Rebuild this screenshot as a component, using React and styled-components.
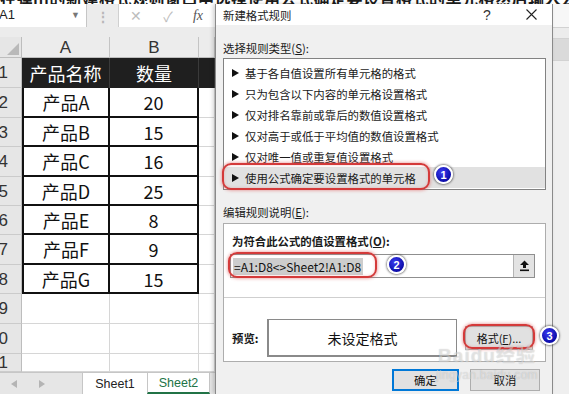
import React from 'react';
import styled, { createGlobalStyle, css } from 'styled-components';

const Global = createGlobalStyle`
  html, body { margin: 0; padding: 0; }
  body {
    width: 569px; height: 394px; overflow: hidden; background: #fff;
    font-family: "Noto Sans CJK SC", "Noto Sans", sans-serif;
  }
  #root { width: 569px; height: 394px; }
`;

const CJK = `"Noto Sans CJK SC", "Noto Sans", sans-serif`;
const LAT = `"Liberation Sans", "Noto Sans CJK SC", sans-serif`;

const Page = styled.div`
  width: 569px; height: 394px; display: flex; flex-direction: column; overflow: hidden;
`;
const TopStrip = styled.div`
  flex: none; height: 4px; overflow: hidden; clip-path: inset(0 0 0 0); contain: paint;
  background: #fff; white-space: nowrap; display: flex; align-items: flex-end;
`;
const StripText = styled.div`
  flex: none; font-family: ${CJK}; font-size: 16px; line-height: 16px; font-weight: 700;
  color: #1c1c1c; margin-bottom: -2px; letter-spacing: 0.5px;
`;
const Main = styled.div`
  flex: 1; display: flex; min-height: 0;
`;

/* ---------- Excel sheet ---------- */
const Sheet = styled.div`
  width: 215px; flex: none; display: flex; flex-direction: column; background: #e8e8e8;
`;
const FormulaBar = styled.div`
  height: 23px; display: flex; align-items: stretch; background: #ececec;
`;
const NameBox = styled.div`
  width: 87px; background: #fff; border-right: 1px solid #c6c6c6; box-sizing: border-box;
  display: flex; align-items: center; justify-content: space-between; padding: 0 6px 2px 0;
  font-family: ${LAT}; font-size: 13px; color: #222; overflow: hidden;
`;
const NameText = styled.span` margin-left: -1px; `;
const Caret = styled.span` font-size: 9px; color: #777; `;
const Grip = styled.div`
  width: 31px; display: flex; align-items: center; justify-content: center;
  color: #b8b8b8; font-size: 14px; font-weight: 700;
`;
const FxBox = styled.div`
  flex: 1; background: #fff; border-left: 1px solid #d0d0d0; display: flex; align-items: center;
  font-family: ${LAT}; color: #bdbdbd; font-size: 14px; overflow: hidden;
`;
const FxIcon = styled.span`
  width: ${p => p.$w}px; flex: none; text-align: center;
  ${p => p.$fx && css`font-family: "Liberation Serif", serif; font-style: italic; color: #555; font-size: 14px;`}
`;
const BarGap = styled.div` height: 10px; background: #ececec; `;

const Grid = styled.div`
  display: grid;
  grid-template-columns: 22px 88px 89px 16px;
  grid-template-rows: 21px 30px 30px 29px 30px 29px 29px 30px 29px 30px 30px 18px;
  background: #fff;
`;

const kinds = {
  corner: css`background: #e6e6e6; border-right: 1px solid #bdbdbd; border-bottom: 1px solid #bdbdbd;
    align-items: flex-end; justify-content: flex-end; padding: 0 2px 2px 0;`,
  colhead: css`background: #ececec; border-right: 1px solid #c4c4c4; border-bottom: 1px solid #bdbdbd;
    font-family: ${LAT}; font-size: 17px; color: #333;`,
  rowhead: css`background: #e6e6e6; border-right: 1px solid #bdbdbd; border-bottom: 1px solid #cbcbcb;
    justify-content: flex-end; padding-right: 13px; font-family: ${LAT}; font-size: 17px; color: #333;`,
  dark: css`background: #1f1f1f; color: #fff; border-right: 1px solid #3a3a3a; font-family: ${CJK}; font-size: 18px;`,
  data: css`background: #fff; color: #111; border-right: 2px solid #111; border-bottom: 2px solid #111;
    font-family: ${CJK}; font-size: 18px;`,
  blank: css`background: #fff; border-right: 1px solid #d6d6d6; border-bottom: 1px solid #d6d6d6;`,
};

const Cell = styled.div`
  box-sizing: border-box; display: flex; align-items: center; justify-content: center;
  overflow: hidden; white-space: nowrap; line-height: 1;
  ${p => kinds[p.$kind]}
  ${p => p.$lead && css`border-left: 2px solid #111;`}
`;

const Tabs = styled.div`
  height: 22px; display: flex; align-items: stretch; background: #e6e6e6;
  border-top: 1px solid #c6c6c6; box-sizing: border-box;
`;
const Nav = styled.div`
  width: 82px; display: flex; align-items: center; padding-left: 11px; gap: 22px; box-sizing: border-box;
`;
const Tab = styled.div`
  width: ${p => p.$w}px; display: flex; align-items: center; justify-content: center;
  font-family: ${LAT}; font-size: 12.5px; background: #fff; box-sizing: border-box;
  border-left: 1px solid #c6c6c6;
  color: ${p => (p.$active ? '#217346' : '#222')};
  ${p => p.$active && css`border-bottom: 2px solid #217346; border-right: 1px solid #c6c6c6;`}
`;

/* ---------- Dialog ---------- */
const Dialog = styled.div`
  width: 338px; flex: none; display: flex; flex-direction: column; background: #f0f0f0;
  position: relative; box-sizing: border-box;
  border-left: 1px solid #8a8a8a; border-right: 1px solid #8a8a8a;
  box-shadow: -2px 0 4px rgba(0, 0, 0, 0.18);
  font-family: ${CJK}; color: #1a1a1a;
`;
const TitleBar = styled.div`
  height: 21px; background: #fff; display: flex; align-items: center; padding: 0 11px 0 7px;
`;
const Title = styled.span` font-size: 11.4px; color: #222; flex: 1; `;
const TitleBtn = styled.span`
  width: ${p => p.$w}px; display: flex; justify-content: center; font-family: ${LAT};
  font-size: ${p => p.$fs}px; color: #333; margin-left: ${p => p.$ml || 0}px;
`;
const Body = styled.div`
  flex: 1; display: flex; flex-direction: column; padding: 0 6px 0 7px;
`;
const Label = styled.div`
  margin-top: ${p => p.$mt}px; font-size: 11.4px; line-height: 16px;
  u { text-decoration: underline; }
`;
const List = styled.div`
  margin-top: 2px; height: 132px; box-sizing: border-box; border: 1px solid #828282;
  background: #fff; padding-top: 3px; position: relative;
`;
const Item = styled.div`
  height: 21px; display: flex; align-items: center; gap: 6px; padding-left: 8px;
  font-size: 11.4px; color: #1a1a1a; background: ${p => (p.$sel ? '#e1e1e1' : 'transparent')};
`;
const DescBox = styled.div`
  margin-top: 3px; height: 139px; box-sizing: border-box; border: 1px solid #adadad;
  background: #fff; position: relative; display: flex; flex-direction: column;
`;
const Bold = styled.div`
  margin: 9px 0 0 8px; font-size: 11.4px; line-height: 16px; font-weight: 700;
`;
const InputRow = styled.div`
  margin: 5px 10px 0 6px; height: 24px; box-sizing: border-box; border: 1px solid #8f8f8f;
  display: flex; background: #fff;
`;
const FormulaText = styled.div`
  flex: 1; display: flex; align-items: center; padding-left: 2px;
`;
const Selected = styled.span`
  background: #cdcdcd; color: #111; font-size: 12px; line-height: 17px; padding: 0 2px 0 1px;
  font-family: ${CJK};
`;
const RefBtn = styled.div`
  width: 20px; background: #e3e3e3; border-left: 1px solid #b4b4b4;
  display: flex; align-items: center; justify-content: center;
`;
const Divider = styled.div` margin-top: 19px; height: 1px; background: #cfcfcf; `;
const PreviewRow = styled.div`
  margin-top: 21px; display: flex; align-items: center; padding-left: 8px; position: relative;
`;
const PreviewLabel = styled.span` width: 35px; font-size: 11.4px; font-weight: 700; `;
const PreviewBox = styled.div`
  width: 190px; height: 38px; box-sizing: border-box; border: 1px solid #8a8a8a;
  border-left-width: 2px; border-bottom-width: 2px;
  display: flex; align-items: center; justify-content: center; font-size: 14px; color: #111;
`;
const Button = styled.div`
  width: ${p => p.$w}px; height: ${p => p.$h}px; box-sizing: border-box; background: #e1e1e1;
  border: ${p => (p.$primary ? '2px solid #0078d7' : '1px solid #adadad')};
  display: flex; align-items: center; justify-content: center; font-size: ${p => p.$fs || 11.4}px;
  color: #111; margin-left: ${p => p.$ml || 0}px;
`;
const ButtonRow = styled.div`
  margin-top: 7px; display: flex; justify-content: flex-end; gap: 11px; padding-right: 6px;
`;

const Oval = styled.span`
  position: absolute; left: ${p => p.$l}px; top: ${p => p.$t}px; width: ${p => p.$w}px; height: ${p => p.$h}px;
  box-sizing: border-box; border: 2px solid #d43a3a; border-radius: 9px; pointer-events: none;
  box-shadow: 0 0 3px 1px rgba(220, 90, 90, 0.45), inset 0 0 3px rgba(220, 90, 90, 0.35);
`;
const Badge = styled.span`
  position: absolute; left: ${p => p.$l}px; top: ${p => p.$t}px; z-index: 5;
  width: 19px; height: 19px; box-sizing: border-box; border-radius: 50%;
  background: radial-gradient(circle at 40% 35%, #3c3cf2, #0b0ba8 70%);
  border: 2px solid #fff; box-shadow: 0 0 2px 1px rgba(0, 0, 0, 0.45);
  color: #fff; font-family: ${LAT}; font-weight: 700; font-size: 11px;
  display: flex; align-items: center; justify-content: center;
`;
const Watermark = styled.div`
  position: absolute; left: 221px; top: 341px; width: 100px; pointer-events: none; z-index: 4;
  display: flex; flex-direction: column; align-items: center;
  color: rgba(255, 255, 255, 0.45); text-shadow: 0 0 1px rgba(0, 0, 0, 0.22);
`;
const WmBig = styled.span` font-family: ${LAT}; font-size: 19px; line-height: 22px; font-weight: 700; letter-spacing: 1px; white-space: nowrap; `;
const WmSmall = styled.span` font-family: ${LAT}; font-size: 12px; line-height: 12px; margin-top: 2px; letter-spacing: 0.3px; white-space: nowrap; `;

/* ---------- right strip ---------- */
const RightStrip = styled.div`
  flex: 1; display: flex; flex-direction: column; background: #efefef;
`;
const StripPart = styled.div`
  height: ${p => p.$h}px; background: ${p => p.$bg}; border-bottom: 1px solid #d2d2d2;
`;

const Arrow = ({ dir }) => (
  <svg width="6" height="8" viewBox="0 0 6 8">
    <polygon points={dir === 'l' ? '6,0 0,4 6,8' : '0,0 6,4 0,8'} fill="#b4b4b4" />
  </svg>
);
const Tri = () => (
  <svg width="7" height="8" viewBox="0 0 7 8">
    <polygon points="0,0 7,4 0,8" fill="#111" />
  </svg>
);
const RefIcon = () => (
  <svg width="11" height="12" viewBox="0 0 11 12">
    <polygon points="5.5,0.5 10,5 7,5 7,8 4,8 4,5 1,5" fill="#111" />
    <rect x="1" y="9.5" width="9" height="1.6" fill="#111" />
  </svg>
);
const CornerTri = () => (
  <svg width="12" height="12" viewBox="0 0 12 12">
    <polygon points="12,0 12,12 0,12" fill="#b9b9b9" />
  </svg>
);
const CloseIcon = () => (
  <svg width="11" height="11" viewBox="0 0 11 11">
    <path d="M0.5 0.5 L10.5 10.5 M10.5 0.5 L0.5 10.5" stroke="#222" strokeWidth="1.1" fill="none" />
  </svg>
);

const tableRows = [
  { h: '1', a: '产品名称', b: '数量', head: true },
  { h: '2', a: '产品A', b: '20' },
  { h: '3', a: '产品B', b: '15' },
  { h: '4', a: '产品C', b: '16' },
  { h: '5', a: '产品D', b: '25' },
  { h: '6', a: '产品E', b: '8' },
  { h: '7', a: '产品F', b: '9' },
  { h: '8', a: '产品G', b: '15' },
];
const blankRows = ['9', '10', '11'];

const rules = [
  '基于各自值设置所有单元格的格式',
  '只为包含以下内容的单元格设置格式',
  '仅对排名靠前或靠后的数值设置格式',
  '仅对高于或低于平均值的数值设置格式',
  '仅对唯一值或重复值设置格式',
  '使用公式确定要设置格式的单元格',
];

export default function App() {
  return (
    <Page>
      <Global />
      <TopStrip>
        <StripText>在弹出的新建格式规则窗口中选择使用公式确定要设置格式的单元格然后输入公式再点击格式按钮进行设置操作步骤</StripText>
      </TopStrip>
      <Main>
        <Sheet>
          <FormulaBar>
            <NameBox>
              <NameText>A1</NameText>
              <Caret>▼</Caret>
            </NameBox>
            <Grip>⋮</Grip>
            <FxBox>
              <FxIcon $w={34}>✕</FxIcon>
              <FxIcon $w={30}>✓</FxIcon>
              <FxIcon $w={30} $fx>fx</FxIcon>
            </FxBox>
          </FormulaBar>
          <BarGap />
          <Grid>
            <Cell $kind="corner"><CornerTri /></Cell>
            <Cell $kind="colhead">A</Cell>
            <Cell $kind="colhead">B</Cell>
            <Cell $kind="colhead" />
            {tableRows.map(r => (
              <React.Fragment key={r.h}>
                <Cell $kind="rowhead">{r.h}</Cell>
                <Cell $kind={r.head ? 'dark' : 'data'} $lead={!r.head}>{r.a}</Cell>
                <Cell $kind={r.head ? 'dark' : 'data'}>{r.b}</Cell>
                <Cell $kind={r.head ? 'dark' : 'blank'} />
              </React.Fragment>
            ))}
            {blankRows.map(n => (
              <React.Fragment key={n}>
                <Cell $kind="rowhead">{n}</Cell>
                <Cell $kind="blank" />
                <Cell $kind="blank" />
                <Cell $kind="blank" />
              </React.Fragment>
            ))}
          </Grid>
          <Tabs>
            <Nav>
              <Arrow dir="l" />
              <Arrow dir="r" />
            </Nav>
            <Tab $w={65}>Sheet1</Tab>
            <Tab $w={63} $active>Sheet2</Tab>
          </Tabs>
        </Sheet>

        <Dialog>
          <TitleBar>
            <Title>新建格式规则</Title>
            <TitleBtn $w={16} $fs={14}>?</TitleBtn>
            <TitleBtn $w={20} $fs={17} $ml={26}><CloseIcon /></TitleBtn>
          </TitleBar>
          <Body>
            <Label $mt={15}>选择规则类型(<u>S</u>):</Label>
            <List>
              {rules.map((t, i) => (
                <Item key={t} $sel={i === 5}>
                  <Tri />
                  <span>{t}</span>
                </Item>
              ))}
              <Oval $l={-2} $t={104} $w={208} $h={27} />
              <Badge $l={210} $t={106}>1</Badge>
            </List>
            <Label $mt={14}>编辑规则说明(<u>E</u>):</Label>
            <DescBox>
              <Bold>为符合此公式的值设置格式(<u>O</u>):</Bold>
              <InputRow>
                <FormulaText>
                  <Selected>=A1:D8&lt;&gt;Sheet2!A1:D8</Selected>
                </FormulaText>
                <RefBtn><RefIcon /></RefBtn>
              </InputRow>
              <Divider />
              <PreviewRow>
                <PreviewLabel>预览:</PreviewLabel>
                <PreviewBox>未设定格式</PreviewBox>
                <Button $w={68} $h={24} $ml={8} $fs={11}>格式(<u>F</u>)...</Button>
              </PreviewRow>
              <Oval $l={4} $t={28} $w={149} $h={26} />
              <Badge $l={163} $t={31}>2</Badge>
              <Oval $l={239} $t={100} $w={72} $h={25} />
              <Badge $l={316} $t={102}>3</Badge>
            </DescBox>
            <ButtonRow>
              <Button $w={67} $h={22} $primary>确定</Button>
              <Button $w={70} $h={22}>取消</Button>
            </ButtonRow>
          </Body>
          <Watermark>
            <WmBig>Baidu经验</WmBig>
            <WmSmall>jingyan.baidu.com</WmSmall>
          </Watermark>
        </Dialog>

        <RightStrip>
          <StripPart $h={23} $bg="#f7f7f7" />
          <StripPart $h={10} $bg="#ececec" />
          <StripPart $h={21} $bg="#dadada" />
        </RightStrip>
      </Main>
    </Page>
  );
}
